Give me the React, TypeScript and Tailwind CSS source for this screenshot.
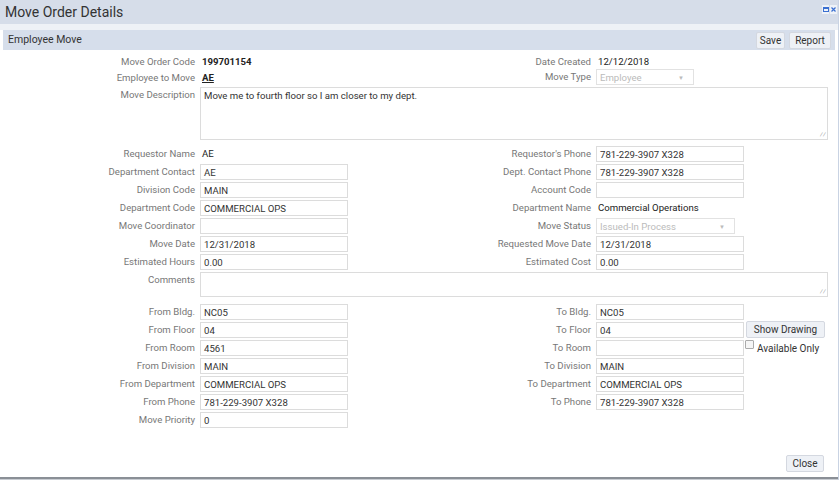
import React from 'react';

const font = { fontFamily: 'Roboto, "Liberation Sans", sans-serif' };

const Label: React.FC<{ w: string; children?: React.ReactNode }> = ({ w, children }) => (
  <div className={`${w} shrink-0 text-right pr-[5px] text-[#777] leading-[15px]`}>{children}</div>
);

const Input: React.FC<{ value?: string; w?: string }> = ({ value, w = 'w-[148px]' }) => (
  <div className={`${w} h-[16px] border border-[#dcdcdc] bg-white px-[3px] pt-[1px] text-[#333] leading-[14px] truncate`}>
    {value}
  </div>
);

const Select: React.FC<{ value: string; w: string }> = ({ value, w }) => (
  <div className={`${w} h-[16px] border border-[#e2e2e2] bg-white px-[3px] pt-[1px] flex items-center justify-between text-[#bbb] leading-[14px]`}>
    <span>{value}</span>
    <span className="text-[6px] mr-[6px]">▼</span>
  </div>
);

type Cell = { label: string; node: React.ReactNode };

const Row: React.FC<{ left: Cell; right?: Cell; extra?: React.ReactNode }> = ({ left, right, extra }) => (
  <div className="flex h-[18px] items-start">
    <div className="flex w-[420px] shrink-0">
      <Label w="w-[200px]">{left.label}</Label>
      {left.node}
    </div>
    {right && (
      <div className="flex">
        <Label w="w-[176px]">{right.label}</Label>
        {right.node}
        {extra}
      </div>
    )}
  </div>
);

const Btn: React.FC<{ children: React.ReactNode; className?: string }> = ({ children, className = '' }) => (
  <div className={`h-[17px] border border-[#d4d8e0] bg-[#eef1f6] rounded-[2px] text-[#333] text-[10px] leading-[15px] text-center ${className}`}>
    {children}
  </div>
);

const Plain: React.FC<{ v: string; bold?: boolean; u?: boolean }> = ({ v, bold, u }) => (
  <div className={`pl-[2px] leading-[15px] text-[#222] ${bold ? 'font-bold' : ''} ${u ? 'underline' : ''}`}>{v}</div>
);

export default function App() {
  return (
    <div style={font} className="w-[839px] h-[480px] bg-white text-[9.6px] flex flex-col overflow-hidden border-r border-[#c9d3e3]">
      <div className="h-[24px] bg-[#d6dde9] flex items-center justify-between pl-[5px] pr-[1px]">
        <div className="text-[14px] text-[#333] leading-none">Move Order Details</div>
        <div className="flex gap-[1px] -mt-[5px]">
          <div className="w-[7px] h-[9px] bg-[#eef2f8] flex items-center justify-center">
            <div className="w-[6px] h-[5px] border border-[#3a6fd1] border-t-2" />
          </div>
          <div className="w-[7px] h-[9px] bg-[#eef2f8] flex items-center justify-center">
            <svg width="5" height="5" viewBox="0 0 5 5">
              <path d="M0.5 0.5 L4.5 4.5 M4.5 0.5 L0.5 4.5" stroke="#3a6fd1" strokeWidth="1.2" />
            </svg>
          </div>
        </div>
      </div>
      <div className="h-[6px] bg-[#eef1f6]" />
      <div className="mx-[3px] h-[20px] bg-[#d6deeb] flex items-center justify-between pl-[5px] pr-[4px]">
        <div className="text-[10.5px] text-[#333]">Employee Move</div>
        <div className="flex gap-[4px]">
          <Btn className="w-[29px]">Save</Btn>
          <Btn className="w-[42px]">Report</Btn>
        </div>
      </div>

      <div className="pt-[4px] flex flex-col">
        <Row left={{ label: 'Move Order Code', node: <Plain v="199701154" bold /> }} right={{ label: 'Date Created', node: <Plain v="12/12/2018" /> }} />
        <div className="flex h-[16px] items-start -mt-[3px]">
          <div className="flex w-[420px] shrink-0 pt-[1px]">
            <Label w="w-[200px]">Employee to Move</Label>
            <Plain v="AE" bold u />
          </div>
          <div className="flex">
            <Label w="w-[176px]">Move Type</Label>
            <Select value="Employee" w="w-[98px]" />
          </div>
        </div>
        <div className="flex h-[55px] mt-[2px]">
          <Label w="w-[200px]">Move Description</Label>
          <div className="relative w-[628px] h-[53px] border border-[#dcdcdc] px-[3px] py-[1px] text-[#333] leading-[14px]">
            Move me to fourth floor so I am closer to my dept.
            <span className="absolute right-[1px] bottom-[0px] text-[7px] text-[#999] leading-none">⁄⁄</span>
          </div>
        </div>
        <div className="h-[4px]" />
        <Row left={{ label: 'Requestor Name', node: <Plain v="AE" /> }} right={{ label: "Requestor's Phone", node: <Input value="781-229-3907 X328" /> }} />
        <Row left={{ label: 'Department Contact', node: <Input value="AE" /> }} right={{ label: 'Dept. Contact Phone', node: <Input value="781-229-3907 X328" /> }} />
        <Row left={{ label: 'Division Code', node: <Input value="MAIN" /> }} right={{ label: 'Account Code', node: <Input /> }} />
        <Row left={{ label: 'Department Code', node: <Input value="COMMERCIAL OPS" /> }} right={{ label: 'Department Name', node: <Plain v="Commercial Operations" /> }} />
        <Row left={{ label: 'Move Coordinator', node: <Input /> }} right={{ label: 'Move Status', node: <Select value="Issued-In Process" w="w-[139px]" /> }} />
        <Row left={{ label: 'Move Date', node: <Input value="12/31/2018" /> }} right={{ label: 'Requested Move Date', node: <Input value="12/31/2018" /> }} />
        <Row left={{ label: 'Estimated Hours', node: <Input value="0.00" /> }} right={{ label: 'Estimated Cost', node: <Input value="0.00" /> }} />
        <div className="flex h-[30px]">
          <Label w="w-[200px]">Comments</Label>
          <div className="relative w-[628px] h-[25px] border border-[#dcdcdc]">
            <span className="absolute right-[1px] bottom-[0px] text-[7px] text-[#999] leading-none">⁄⁄</span>
          </div>
        </div>
        <div className="h-[2px]" />
        <Row left={{ label: 'From Bldg.', node: <Input value="NC05" /> }} right={{ label: 'To Bldg.', node: <Input value="NC05" /> }} />
        <Row
          left={{ label: 'From Floor', node: <Input value="04" /> }}
          right={{ label: 'To Floor', node: <Input value="04" /> }}
          extra={<Btn className="ml-[2px] -mt-[1px] w-[79px] bg-[#e9edf5]">Show Drawing</Btn>}
        />
        <Row
          left={{ label: 'From Room', node: <Input value="4561" /> }}
          right={{ label: 'To Room', node: <Input /> }}
          extra={
            <div className="flex items-start ml-[1px] -mt-[1px] text-[#333]">
              <div className="w-[9px] h-[9px] border border-[#aaa] rounded-[1px] bg-[#f5f5f5] mt-[1px]" />
              <span className="ml-[3px] leading-[15px] mt-[2px] text-[10px]">Available Only</span>
            </div>
          }
        />
        <Row left={{ label: 'From Division', node: <Input value="MAIN" /> }} right={{ label: 'To Division', node: <Input value="MAIN" /> }} />
        <Row left={{ label: 'From Department', node: <Input value="COMMERCIAL OPS" /> }} right={{ label: 'To Department', node: <Input value="COMMERCIAL OPS" /> }} />
        <Row left={{ label: 'From Phone', node: <Input value="781-229-3907 X328" /> }} right={{ label: 'To Phone', node: <Input value="781-229-3907 X328" /> }} />
        <Row left={{ label: 'Move Priority', node: <Input value="0" /> }} />
      </div>

      <div className="flex-1" />
      <div className="flex justify-end pr-[14px] pb-[5px]">
        <Btn className="w-[38px]">Close</Btn>
      </div>
      <div className="h-[2px] bg-[#8a8f96]" />
      <div className="h-[1px] bg-[#c8ccd2]" />
    </div>
  );
}
